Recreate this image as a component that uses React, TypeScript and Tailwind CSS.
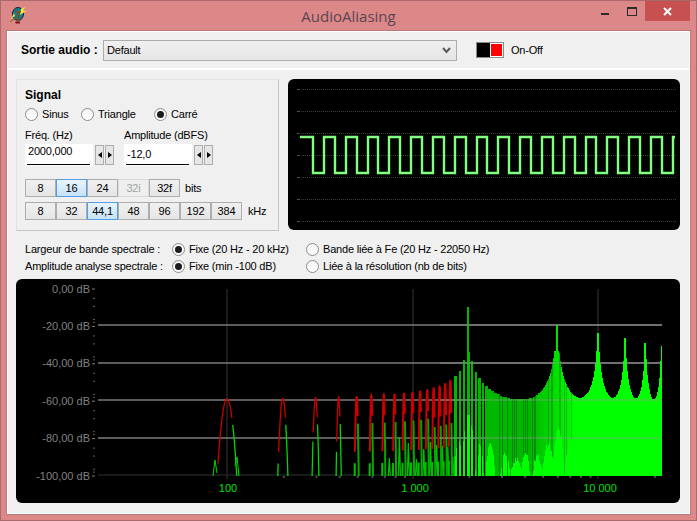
import React from "react";

const font = "font-['Liberation_Sans',Arial,sans-serif]";

// --- spectrum maths, in page pixels ---
const xOf = (f: number) => 227 + 185.5 * Math.log10(f / 100);
const fOf = (x: number) => 100 * Math.pow(10, (x - 227) / 185.5);
const yOfDb = (db: number) => 287.5 - db * 1.875;
const peaks = [
  { f: 2000, top: 307 },
  { f: 6000, top: 325 },
  { f: 10000, top: 333 },
  { f: 14000, top: 338 },
  { f: 18000, top: 343 },
  { f: 22000, top: 346 },
];
const envY = (f: number) => {
  let a = f > 2000 ? -0.0002 : 0;
  for (const p of peaks) {
    if (p.f === 2000) a += 1.1 / Math.max(Math.abs(f - p.f), 60);
    else if (f < 2000) a += 1.1 / Math.abs(f - p.f);
    else a += 61 / Math.pow(Math.max(Math.abs(f - p.f), 180), 1.54);
  }
  a = Math.max(a, 0.00108);
  return yOfDb(20 * Math.log10(a));
};
const noise = (n: number) => {
  const s = Math.sin(n * 12.9898) * 43758.5453;
  return s - Math.floor(s);
};

const redLeft: Record<number, number> = { 100: 472, 200: 462, 300: 440, 400: 447 };

function buildLobes() {
  const out: { red: string; greenL: string; greenR: string; dark: boolean }[] = [];
  for (let h = 100; h <= 1600; h += 100) {
    const cx = xOf(h);
    const top = envY(h);
    const hw = Math.max(xOf(h + 13) - cx, 1.6);
    const split = redLeft[h] ?? 452;
    const splitR = h < 500 ? 421 : 418;
    const dome = (u: number) => top + (476 - top) * u * u;
    let red = "";
    let greenL = "";
    let greenR = "";
    for (let i = 0; i <= 24; i++) {
      const u = i / 12 - 1;
      const x = cx + hw * u;
      const y = dome(u);
      const isRed = u < 0 ? y < split : y < splitR;
      if (isRed) red += `${red ? "L" : "M"}${x.toFixed(1)} ${y.toFixed(1)}`;
      else if (u < 0) greenL += `${greenL ? "L" : "M"}${x.toFixed(1)} ${y.toFixed(1)}`;
      else greenR += `${greenR ? "L" : "M"}${x.toFixed(1)} ${y.toFixed(1)}`;
    }
    out.push({ red, greenL, greenR, dark: h >= 500 });
  }
  return out;
}

type Col = { x: number; y: number; h: number; c: string };

function buildColumns() {
  const cols: Col[] = [];
  const humps = [
    [468, 7, 410], [458, 4, 435], [480, 3, 440], [490, 5, 440],
    [505, 5, 450], [516, 6, 455], [525, 5, 450], [537, 5, 452], [548, 7, 442],
    [558, 6, 425], [570, 6, 435], [585, 10, 425],
  ];
  for (let px = 453; px < 662; px++) {
    const f = fOf(px + 0.5);
    const h = Math.round(f / 100) * 100;
    const sp = xOf(h + 100) - xOf(h);
    const d = Math.abs(xOf(h) - (px + 0.5));
    const limit = px < 475 ? sp * 0.3 : sp * 0.5 - 0.35;
    const gap = d > limit;
    const nearPeak = peaks.find((p) => Math.abs(xOf(p.f) - (px + 0.5)) < 1);
    let top = px < 540 ? envY(h) : envY(f);
    if (nearPeak) top = nearPeak.top;
    // black slits between the low harmonics, only darker lines further up
    if (gap && !nearPeak && px < 490) continue;
    const k = Math.min(1, Math.max(0, (px - 530) / 45));
    const g = Math.round(184 + k * 71);
    const dim = px < 535 ? gap : px < 575 && noise(px) > 0.75;
    cols.push({ x: px, y: top, h: 476 - top, c: `rgb(0,${dim ? g - 50 : g},0)` });
    if (gap && px < 510) continue;
    // brighter blotches low in the spectrum
    for (const [cx, w, t] of humps) {
      const u = Math.abs(px - cx) / w;
      if (u > 1) continue;
      const bt = Math.round(t + (476 - t) * u * u * 0.9 + noise(px * 3 + cx) * 6);
      cols.push({ x: px, y: bt, h: 476 - bt, c: "#00ff00" });
    }
  }
  return cols;
}

const lobes = buildLobes();
const columns = buildColumns();
const fillers = [700, 800, 900, 1000, 1100, 1200, 1300, 1400, 1500, 1600].map((h) => ({
  x: xOf(h + 50),
  top: Math.round(436 + noise(h) * 24),
}));

let squarePath = "M300 137";
{
  let high = true;
  for (let k = 0; k <= 33; k++) {
    const x = Math.round(313 + 10.9 * k);
    squarePath += `L${x} ${high ? 137 : 173}L${x} ${high ? 173 : 137}`;
    high = !high;
  }
  squarePath += "L675 137";
}

function Radio({ on, label, className = "" }: { on?: boolean; label: string; className?: string }) {
  return (
    <div className={`flex items-center gap-[4px] ${className}`}>
      <div className="w-[13px] h-[13px] rounded-full border border-[#8c8c8c] bg-linear-to-b from-[#f4f4f4] to-white flex items-center justify-center shrink-0">
        {on && <div className="w-[7px] h-[7px] rounded-full bg-[#1c1c1c]" />}
      </div>
      <span className="whitespace-nowrap">{label}</span>
    </div>
  );
}

function Btn({ label, on, off }: { label: string; on?: boolean; off?: boolean }) {
  let cls = "border-[#adadad] from-[#f0f0f0] to-[#e5e5e5] text-black";
  if (on) cls = "border-[#569de5] from-[#e8f4fc] to-[#c6e2f8] text-black";
  if (off) cls = "border-[#d9d9d9] from-[#efefef] to-[#efefef] text-[#a0a0a0]";
  return (
    <div className={`w-[31px] h-[18px] border bg-linear-to-b flex items-center justify-center ${cls}`}>
      {label}
    </div>
  );
}

function Spin() {
  return (
    <div className="flex gap-[1px] mt-[1px]">
      <div className="w-[9px] h-[20px] border border-[#adadad] bg-[#e6e6e6] flex items-center justify-center">
        <div className="border-y-[3px] border-y-transparent border-r-[4px] border-r-black" />
      </div>
      <div className="w-[9px] h-[20px] border border-[#adadad] bg-[#e6e6e6] flex items-center justify-center">
        <div className="border-y-[3px] border-y-transparent border-l-[4px] border-l-black" />
      </div>
    </div>
  );
}

function NumField({ value, pt }: { value: string; pt: string }) {
  return (
    <div className="w-[68px] h-[22px] bg-white px-[2px] flex flex-col">
      <div className={`flex-1 pl-[1px] leading-[14px] ${pt}`}>{value}</div>
      <div className="h-[1px] bg-black mr-[1px] mb-[1px]" />
    </div>
  );
}

function AppIcon() {
  return (
    <svg width="17" height="18" viewBox="0 0 17 18">
      <ellipse cx="8" cy="8" rx="5.5" ry="6.5" fill="#0c7f8c" stroke="#123" strokeWidth="1" />
      <path d="M11 3 L15 1 L13 5 L16 5 L10 9 Z" fill="#f2ee30" />
      <path d="M4 7 L1 13 L5 10 Z" fill="#e8e040" />
      <path d="M5 5 H11 V6.5 H9 V15 H7 V6.5 H5 Z" fill="#8a4a22" />
      <path d="M5.5 15.5 H10 V17.5 H5.5 Z" fill="#7a1010" />
      <path d="M0 16 L5 12" stroke="#6b6b20" strokeWidth="1" />
    </svg>
  );
}

function Scope() {
  const rows = [89, 111, 133, 155, 177, 199, 221];
  return (
    <svg width="392" height="151" viewBox="288 79 392 151" className="block">
      {rows.map((y) => (
        <g key={y}>
          <line x1="299" x2="677" y1={y + 0.5} y2={y + 0.5} stroke="#3a3a3a" strokeDasharray="1 1" />
          <line x1="297" x2="299" y1={y + 0.5} y2={y + 0.5} stroke="#4b5f5b" />
        </g>
      ))}
      <path d={squarePath} fill="none" stroke="#80ff80" strokeWidth="2.4" />
    </svg>
  );
}

function Spectrum() {
  const dbs = [0, -20, -40, -60, -80, -100];
  const minor = [200, 300, 400, 500, 600, 700, 800, 900, 2000, 3000, 4000, 5000, 6000, 7000, 8000, 9000, 20000];
  return (
    <svg width="664" height="224" viewBox="16 279 664 224" className="block tracking-normal">
      {[227, 413, 598].map((x) => (
        <line key={x} x1={x} x2={x} y1="289" y2="479" stroke="#242424" strokeWidth="1.5" />
      ))}
      <line x1="98" x2="662" y1="475" y2="475" stroke="#222222" strokeWidth="1.5" />
      {[325, 363, 400, 438].map((y) => (
        <line key={y} x1="98" x2="662" y1={y} y2={y} stroke="#7d7d7d" strokeWidth="1.5" />
      ))}
      {dbs.map((db, i) => {
        const y = 289 + i * 37.4;
        return (
          <g key={db}>
            <text x="90" y={y + 3.5} textAnchor="end" fontSize="11" fill="#808080" fontFamily="'Liberation Sans', Arial, sans-serif">
              {db === 0 ? "0,00 dB" : `${db},00 dB`}
            </text>
            <rect x="92" y={y - 0.5} width="3" height="1" fill="#808080" />
            {i < 5 &&
              [9, 17, 30, 33].map((o) => <rect key={o} x="93" y={y + o} width="2" height="1" fill="#5c5c5c" />)}
          </g>
        );
      })}
      {minor.map((f) => (
        <rect key={f} x={xOf(f)} y="476" width="2" height="2" fill="#4a4a4a" />
      ))}

      {/* harmonics, red on top */}
      <path d="M213 476L215 460L217 473M235 466L237 457L239 476" fill="none" stroke="#00d800" strokeWidth="1" />
      {fillers.map((s) => (
        <path key={s.x} d={`M${s.x - 1} 476L${s.x} ${s.top}L${s.x + 1} 476`} fill="none" stroke="#00c000" strokeWidth="1.3" />
      ))}
      {lobes.map((l, i) => (
        <g key={i} fill="none" strokeWidth={i < 4 ? 1.3 : 2}>
          <path d={l.greenL} stroke={l.dark ? "#00c000" : "#00d800"} />
          <path d={l.greenR} stroke={l.dark ? "#00a800" : "#00d800"} />
          <path d={l.red} stroke="#cc0000" />
        </g>
      ))}
      <g shapeRendering="crispEdges">
        {columns.map((c, i) => (
          <rect key={i} x={c.x} y={c.y} width="1" height={c.h} fill={c.c} />
        ))}
      </g>
      {[325, 363, 400, 438].map((y) => (
        <line key={y} x1="440" x2="662" y1={y} y2={y} stroke="#9c9c9c" strokeOpacity="0.45" strokeWidth="1.5" />
      ))}

      <g fontSize="11" fill="#00e000" textAnchor="middle" fontFamily="'Liberation Sans', Arial, sans-serif">
        <text x="228" y="492">100</text>
        <text x="415" y="492">1 000</text>
        <text x="600" y="492">10 000</text>
      </g>
    </svg>
  );
}

export default function App() {
  return (
    <div className={`w-[697px] h-[521px] bg-[#dc8889] border border-[#a96a6e] flex flex-col text-[11px] leading-none tracking-[-0.2px] text-black ${font}`}>
      {/* title bar */}
      <div className="h-[29px] grid grid-cols-[1fr_auto_1fr] shrink-0">
        <div className="pl-[9px] pt-[5px]">
          <AppIcon />
        </div>
        <div className="text-[15px] leading-[30px] tracking-normal text-[#5a4650] font-['Open_Sans',sans-serif]">AudioAliasing</div>
        <div className="flex justify-end pr-[6px]">
          <div className="w-[8px] h-[2px] bg-[#2b2b2b] mt-[12px]" />
          <div className="w-[10px] h-[9px] border border-t-2 border-[#2b2b2b] mt-[6px] ml-[18px]" />
          <div className="w-[45px] h-[20px] bg-[#c75050] ml-[8px] flex items-center justify-center">
            <svg width="9" height="9" viewBox="0 0 9 9">
              <path d="M1 1L8 8M8 1L1 8" stroke="white" strokeWidth="2" />
            </svg>
          </div>
        </div>
      </div>

      {/* client area */}
      <div className="ml-[5px] mr-[5px] h-[485px] border border-[#b97a7e] shrink-0">
        <div className="h-full border border-white bg-[#f0f0f0] flex flex-col">
          <div className="h-[38px] border-b-2 border-white flex items-center pl-[13px] shrink-0">
            <span className="font-bold text-[12px] tracking-normal w-[82px]">Sortie audio :</span>
            <div className="w-[354px] h-[21px] border border-[#acacac] bg-linear-to-b from-[#f0f0f0] to-[#e5e5e5] flex items-center justify-between pl-[3px] pr-[5px]">
              <span>Default</span>
              <svg width="9" height="7" viewBox="0 0 9 7">
                <path d="M1 1L4.5 5L8 1" fill="none" stroke="#5a5a5a" strokeWidth="2" />
              </svg>
            </div>
            <div className="ml-[19px] w-[28px] h-[16px] bg-black border border-[#8a8a8a] flex justify-end">
              <div className="w-[13px] h-[14px] bg-[#ff0000] border border-white" />
            </div>
            <span className="ml-[7px]">On-Off</span>
          </div>

          <div className="flex gap-[9px] pl-[8px] pt-[9px] shrink-0">
            <div className="w-[263px] h-[152px] border border-t-[#e2e2e2] border-l-[#e2e2e2] border-r-[#c4c4c4] border-b-[#c4c4c4] pl-[8px] pt-[9px]">
              <div className="font-bold text-[12px] tracking-normal h-[14px]">Signal</div>
              <div className="flex mt-[4px] h-[14px]">
                <Radio label="Sinus" className="w-[56px]" />
                <Radio label="Triangle" className="w-[73px]" />
                <Radio on label="Carré" />
              </div>
              <div className="flex mt-[7px]">
                <div className="w-[99px]">
                  <div className="h-[14px] pt-[2px]">Fréq. (Hz)</div>
                  <div className="flex gap-[2px] mt-[2px]">
                    <NumField value="2000,000" pt="pt-0" />
                    <Spin />
                  </div>
                </div>
                <div>
                  <div className="h-[14px] pt-[2px]">Amplitude (dBFS)</div>
                  <div className="flex gap-[2px] mt-[2px]">
                    <NumField value="-12,0" pt="pt-[3px]" />
                    <Spin />
                  </div>
                </div>
              </div>
              <div className="flex items-center mt-[13px]">
                <Btn label="8" />
                <Btn label="16" on />
                <Btn label="24" />
                <Btn label="32i" off />
                <Btn label="32f" />
                <span className="ml-[5px]">bits</span>
              </div>
              <div className="flex items-center mt-[5px]">
                <Btn label="8" />
                <Btn label="32" />
                <Btn label="44,1" on />
                <Btn label="48" />
                <Btn label="96" />
                <Btn label="192" />
                <Btn label="384" />
                <span className="ml-[6px]">kHz</span>
              </div>
            </div>
            <div className="w-[392px] h-[151px] bg-black rounded-[6px] overflow-hidden">
              <Scope />
            </div>
          </div>

          <div className="pl-[17px] mt-[9px] shrink-0">
            <div className="flex items-center h-[18px]">
              <span className="w-[147px]">Largeur de bande spectrale :</span>
              <Radio on label="Fixe (20 Hz - 20 kHz)" className="w-[134px]" />
              <Radio label="Bande liée à Fe (20 Hz - 22050 Hz)" />
            </div>
            <div className="flex items-center h-[16px]">
              <span className="w-[147px]">Amplitude analyse spectrale :</span>
              <Radio on label="Fixe (min -100 dB)" className="w-[134px]" />
              <Radio label="Liée à la résolution (nb de bits)" />
            </div>
          </div>

          <div className="ml-[8px] mt-[5px] w-[664px] h-[224px] bg-black rounded-[6px] overflow-hidden shrink-0">
            <Spectrum />
          </div>
        </div>
      </div>
    </div>
  );
}
